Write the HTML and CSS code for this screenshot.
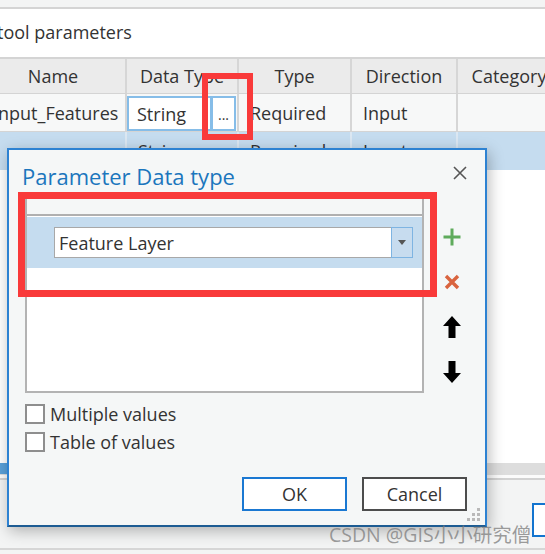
FILE: index.html
```html
<!DOCTYPE html>
<html>
<head>
<meta charset="utf-8">
<link rel="stylesheet" href="styles.css">
</head>
<body>
<div class="app">
  <div class="topstrip"></div>
  <div class="titlebar"><span class="apptitle">tool parameters</span></div>
  <div class="grid">
    <div class="row head">
      <div class="cell c1 center">Name</div>
      <div class="cell c2 center">Data Type</div>
      <div class="cell c3 center">Type</div>
      <div class="cell c4 center">Direction</div>
      <div class="cell c5 center">Category</div>
    </div>
    <div class="row r1">
      <div class="cell c1">Input_Features</div>
      <div class="cell c2 editcell">
        <div class="editbox">String</div>
        <div class="dotsbox">...</div>
      </div>
      <div class="cell c3">Required</div>
      <div class="cell c4">Input</div>
      <div class="cell c5"></div>
    </div>
    <div class="row sel">
      <div class="cell c1"></div>
      <div class="cell c2 pad2">String</div>
      <div class="cell c3">Required</div>
      <div class="cell c4">Input</div>
      <div class="cell c5"></div>
    </div>
  </div>
  <div class="fill"></div>
  <div class="hscroll"><div class="thumb"></div></div>
  <div class="gap"></div>
  <div class="footer"><div class="fbtn"></div></div>
  <div class="bottomline"></div>
</div>

<div class="dialog">
  <div class="dlg-head">
    <div class="dlg-title">Parameter Data type</div>
    <svg class="close" width="14" height="14" viewBox="0 0 14 14"><path d="M1 1 L13 13 M13 1 L1 13" stroke="#555" stroke-width="1.6" fill="none"/></svg>
  </div>
  <div class="dlg-body">
    <div class="list">
      <div class="list-head"></div>
      <div class="list-row">
        <div class="combo">
          <div class="combo-text">Feature Layer</div>
          <div class="combo-btn"><svg width="8" height="5" viewBox="0 0 8 5"><path d="M0 0 L8 0 L4 5 Z" fill="#555"/></svg></div>
        </div>
      </div>
    </div>
    <div class="side">
      <div class="slot"><svg width="18" height="18" viewBox="0 0 18 18"><path d="M9 0.5 V17.5 M0.5 9 H17.5" stroke="#5fab5c" stroke-width="3" fill="none"/></svg></div>
      <div class="slot"><svg width="16" height="16" viewBox="0 0 16 16"><path d="M2 2 L14 14 M14 2 L2 14" stroke="#d9643f" stroke-width="3.4" fill="none"/></svg></div>
      <div class="slot"><svg width="18" height="22" viewBox="0 0 18 22"><path d="M9 0 L18 10 L12.5 10 L12.5 22 L5.5 22 L5.5 10 L0 10 Z" fill="#000"/></svg></div>
      <div class="slot"><svg width="18" height="22" viewBox="0 0 18 22"><path d="M9 22 L18 12 L12.5 12 L12.5 0 L5.5 0 L5.5 12 L0 12 Z" fill="#000"/></svg></div>
    </div>
  </div>
  <div class="checks">
    <label class="chk"><span class="box"></span><span>Multiple values</span></label>
    <label class="chk"><span class="box"></span><span>Table of values</span></label>
  </div>
  <div class="buttons">
    <div class="btn ok">OK</div>
    <div class="btn cancel">Cancel</div>
  </div>
  <svg class="grip" width="16" height="16" viewBox="0 0 16 16">
    <g fill="#b9b9b9">
      <rect x="12" y="1" width="3" height="3"/>
      <rect x="7" y="6" width="3" height="3"/><rect x="12" y="6" width="3" height="3"/>
      <rect x="2" y="11" width="3" height="3"/><rect x="7" y="11" width="3" height="3"/><rect x="12" y="11" width="3" height="3"/>
    </g>
  </svg>
</div>

<div class="mark mark1"></div>
<div class="mark mark2"></div>
<div class="watermark">CSDN @GIS小小研究僧</div>
</body>
</html>
```

FILE: styles.css
```css
html, body {
  margin: 0;
  padding: 0;
  width: 545px;
  height: 554px;
  overflow: hidden;
  background: #f3f4f4;
  font-family: "Open Sans", "Noto Sans CJK SC", sans-serif;
  font-size: 18px;
  color: #333;
}
.app {
  width: 545px;
  height: 554px;
  overflow: hidden;
  display: flex;
  flex-direction: column;
}
.topstrip {
  height: 7px;
  flex: none;
  background: #f3f4f4;
  border-bottom: 2px solid #d4d4d4;
}
.titlebar {
  height: 48px;
  flex: none;
  background: #fff;
  display: flex;
  align-items: center;
}
.apptitle {
  margin-left: -3px;
  margin-top: -2px;
}
.grid {
  flex: none;
  margin-left: -19px;
  background: #fff;
}
.row {
  display: grid;
  grid-template-columns: 144px 112px 113px 106px 104px;
}
.cell {
  box-sizing: border-box;
  display: flex;
  align-items: center;
  padding-left: 11px;
  white-space: nowrap;
  overflow: visible;
}
.cell.c1 { padding-left: 12px; }
.cell.c2, .cell.c3, .cell.c4, .cell.c5 {
  border-left: 2px solid #d6d6d6;
}
.center { justify-content: center; padding-left: 0; }
.cell.c1.center { padding-left: 0; }
.head {
  height: 37px;
  box-sizing: border-box;
  border-top: 2px solid #d4d4d4;
  border-bottom: 1px solid #d4d4d4;
  background: #ebebeb;
}
.r1 {
  height: 38px;
  box-sizing: border-box;
  border-bottom: 1px solid #d4d4d4;
  background: #f7f8f8;
}
.editcell {
  padding: 2px 1px 0 0;
  align-items: stretch;
}
.editbox {
  box-sizing: border-box;
  width: 85px;
  border: 2px solid #86bde8;
  background: #fff;
  padding-left: 8px;
  display: flex;
  align-items: center;
}
.dotsbox {
  box-sizing: border-box;
  width: 24px;
  border: 2px solid #86bde8;
  border-left-width: 1px;
  background: #fff;
  display: flex;
  align-items: center;
  justify-content: center;
  font-size: 14px;
  padding-top: 2px;
}
.sel {
  height: 38px;
  background: #c5dcef;
}
.sel .cell { border-left-color: #dbe7f2; }
.pad2 { padding-left: 11px; }
.fill {
  flex: none;
  height: 293px;
  background: #fff;
}
.hscroll {
  flex: none;
  height: 12px;
  background: #dddddd;
}
.thumb {
  width: 300px;
  height: 11px;
  background: #5aa0d8;
}
.gap {
  flex: none;
  height: 3px;
  background: #fbfbfb;
  border-bottom: 2px solid #d2d2d2;
}
.footer {
  flex: none;
  height: 70px;
  box-sizing: border-box;
  padding: 23px 0 0 532px;
  background: #f3f4f4;
  border-bottom: 2px solid #d6d6d6;
}
.fbtn {
  width: 40px;
  height: 34px;
  box-sizing: border-box;
  border: 2px solid #1374cf;
  background: #fff;
}
.bottomline {
  flex: 1;
  background: #f3f4f4;
}

/* dialog */
.dialog {
  position: absolute;
  left: 7px;
  top: 148px;
  width: 480px;
  height: 379px;
  box-sizing: border-box;
  border: 2px solid #2d82d2;
  border-bottom-color: #1d5c93;
  background: #f5f7f7;
  box-shadow: 2px 4px 14px rgba(0, 0, 0, 0.28);
  display: flex;
  flex-direction: column;
}
.dlg-head {
  height: 46px;
  flex: none;
  display: flex;
  justify-content: space-between;
  align-items: flex-start;
  padding-left: 13px;
}
.dlg-title {
  margin-top: 12px;
  font-size: 22px;
  line-height: 28px;
  color: #1b76bd;
}
.close {
  margin-top: 16px;
  margin-right: 18px;
}
.dlg-body {
  display: flex;
  flex: none;
}
.list {
  margin-left: 16px;
  width: 399px;
  height: 197px;
  box-sizing: border-box;
  border: 2px solid #b3b3b3;
  background: #fff;
}
.list-head {
  height: 16px;
  background: #f5f7f7;
  border-bottom: 2px solid #b0b0b0;
}
.list-row {
  margin-top: 1px;
  height: 51px;
  box-sizing: border-box;
  padding: 10px 9px 0 27px;
  background: #c5dcef;
}
.combo {
  display: flex;
  height: 31px;
  box-sizing: border-box;
  border: 1px solid #a8a8a8;
  background: #fff;
}
.combo-text {
  flex: 1;
  padding-left: 4px;
  display: flex;
  align-items: center;
  font-size: 18px;
}
.combo-btn {
  width: 22px;
  margin: -1px -1px -1px 0;
  box-sizing: border-box;
  border: 1px solid #7eb4e2;
  background: #c7dcef;
  display: flex;
  align-items: center;
  justify-content: center;
}
.side {
  margin-left: 8px;
  width: 40px;
  padding-top: 18px;
  display: flex;
  flex-direction: column;
}
.slot {
  height: 45px;
  display: flex;
  align-items: center;
  justify-content: center;
}
.checks {
  margin: 6px 0 0 16px;
  display: flex;
  flex-direction: column;
}
.chk {
  height: 28px;
  display: flex;
  align-items: center;
  gap: 5px;
}
.box {
  width: 20px;
  height: 20px;
  box-sizing: border-box;
  border: 2px solid #8e8e8e;
  background: #fff;
}
.buttons {
  margin-top: 21px;
  display: flex;
  justify-content: flex-end;
  gap: 15px;
  padding-right: 18px;
}
.btn {
  width: 105px;
  height: 34px;
  box-sizing: border-box;
  background: #fff;
  display: flex;
  align-items: center;
  justify-content: center;
}
.ok { border: 2px solid #1a78d2; }
.cancel { border: 2px solid #4d4d4d; }
.grip {
  position: absolute;
  right: 4px;
  bottom: 2px;
}

/* annotations */
.mark {
  position: absolute;
  box-sizing: border-box;
  border: 7px solid #f93a3a;
}
.mark1 {
  left: 202px;
  top: 73px;
  width: 51px;
  height: 67px;
  border-width: 6px;
}
.mark2 {
  left: 18px;
  top: 192px;
  width: 419px;
  height: 105px;
}
.watermark {
  position: absolute;
  left: 329px;
  top: 521px;
  font-size: 19.5px;
  line-height: 28px;
  color: rgba(125, 125, 125, 0.75);
  white-space: nowrap;
}
```
